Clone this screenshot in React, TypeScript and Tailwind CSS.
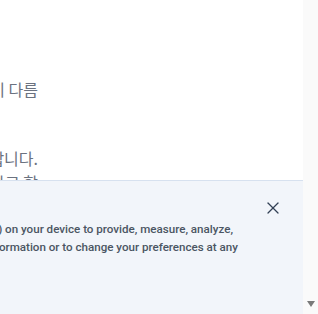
import { X } from 'lucide-react';

export default function App() {
  const kr = '"Noto Sans CJK KR", "Noto Sans", sans-serif';
  const en = 'Roboto, "Noto Sans", sans-serif';

  return (
    <div className="flex h-[314px] w-[318px] overflow-hidden bg-white">
      {/* Page content, scrolled and clipped on the left */}
      <div className="relative flex-1 overflow-hidden">
        <div className="flex flex-col pt-[77px] text-[16px] leading-[24px] text-[#6b7280]" style={{ fontFamily: kr }}>
          <div className="flex w-[38px] justify-end whitespace-nowrap">
            <span>서비스마다 이용 방식이 다름</span>
          </div>
          <div className="mt-[45px] flex w-[38px] justify-end whitespace-nowrap">
            <span>서비스를 제공하기 위해 사용합니다.</span>
          </div>
          <div className="flex w-[38px] justify-end whitespace-nowrap">
            <span>이용자가 동의하고 할</span>
          </div>
        </div>

        {/* Cookie banner */}
        <div className="absolute inset-x-0 bottom-0 top-[180px] border-t border-[#d7e1ef] bg-[#f2f5fa]">
          <button className="absolute left-[263px] top-[17px] text-[#334155]">
            <X className="h-[20px] w-[20px]" strokeWidth={1.5} />
          </button>
          <div className="flex flex-col pt-[39px] text-[11.6px] font-medium leading-[18px] text-[#4b5563]" style={{ fontFamily: en }}>
            <div className="flex w-[233px] justify-end whitespace-nowrap">
              <span>We and our partners store and/or access information (such as cookies) on your device to provide, measure, analyze,</span>
            </div>
            <div className="flex w-[238px] justify-end whitespace-nowrap">
              <span>and improve our services. For more information or to change your preferences at any</span>
            </div>
          </div>
        </div>
      </div>

      {/* Scrollbar */}
      <div className="flex w-[15px] flex-col items-center justify-end bg-[#fafafa] pb-[7px]">
        <div className="h-0 w-0 border-x-[4px] border-t-[6px] border-x-transparent border-t-[#7a7a7a]" />
      </div>
    </div>
  );
}
